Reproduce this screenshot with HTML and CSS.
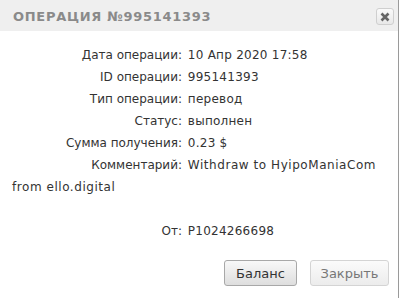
FILE: index.html
```html
<!DOCTYPE html>
<html lang="ru">
<head>
<meta charset="utf-8">
<link rel="stylesheet" href="styles.css">
</head>
<body>
<div class="dialog">
  <div class="header">
    <span class="title">ОПЕРАЦИЯ №995141393</span>
    <button class="close" aria-label="close">
      <svg width="10" height="10" viewBox="0 0 10 10"><path d="M1.5 1.5 L8.5 8.5 M8.5 1.5 L1.5 8.5" stroke="#666" stroke-width="2.6" stroke-linecap="butt"/></svg>
    </button>
  </div>
  <div class="content">
    <div class="row"><span class="label">Дата операции:</span> <span class="value">10 Апр 2020 17:58</span></div>
    <div class="row"><span class="label">ID операции:</span> <span class="value">995141393</span></div>
    <div class="row"><span class="label">Тип операции:</span> <span class="value">перевод</span></div>
    <div class="row"><span class="label">Статус:</span> <span class="value">выполнен</span></div>
    <div class="row"><span class="label">Сумма получения:</span> <span class="value">0.23 $</span></div>
    <div class="row"><span class="label">Комментарий:</span> <span class="value latin">Withdraw to HyipoManiaCom from ello.digital</span></div>
    <div class="row empty"></div>
    <div class="row"><span class="label">От:</span> <span class="value">P1024266698</span></div>
  </div>
  <div class="buttons">
    <button class="btn primary">Баланс</button>
    <button class="btn secondary">Закрыть</button>
  </div>
</div>
</body>
</html>
```
FILE: styles.css
```css
html, body {
  margin: 0;
  padding: 0;
  background: #fff;
}
.dialog {
  width: 398px;
  height: 298px;
  border-right: 1px solid #9a9a9a;
  background: #fff;
  font-family: "DejaVu Sans", sans-serif;
  color: #333;
  box-sizing: content-box;
}
.header {
  height: 31px;
  background: #efefef;
  display: flex;
  align-items: center;
  justify-content: space-between;
  padding: 0 4px 0 13px;
  box-sizing: border-box;
}
.title {
  font-size: 13px;
  font-weight: bold;
  color: #8a8a8a;
  letter-spacing: 0.7px;
  margin-top: 1px;
}
.close {
  width: 18px;
  height: 17px;
  margin-top: 2px;
  padding: 0;
  border: 1px solid #cfcfcf;
  border-radius: 3px;
  background: linear-gradient(#fafafa, #e8e8e8);
  display: flex;
  align-items: center;
  justify-content: center;
}
.content {
  padding: 13px 20px 0 12px;
  font-size: 12px;
  line-height: 22px;
}
.row {
  min-height: 22px;
}
.label {
  display: inline-block;
  width: 170px;
  text-align: right;
}
.value {
  margin-left: 2px;
  letter-spacing: 0.25px;
}
.value.latin {
  letter-spacing: 0.55px;
}
.buttons {
  display: flex;
  justify-content: flex-end;
  gap: 13px;
  padding: 18px 9px 0 0;
}
.btn {
  height: 26px;
  font-family: "DejaVu Sans", sans-serif;
  font-size: 13px;
  border-radius: 3px;
  padding: 0;
}
.primary {
  width: 73px;
  border: 1px solid #a8a8a8;
  background: linear-gradient(#f8f8f8, #dedede);
  color: #333;
}
.secondary {
  width: 79px;
  border: 1px solid #d4d4d4;
  background: linear-gradient(#fbfbfb, #ececec);
  color: #777;
}
```
